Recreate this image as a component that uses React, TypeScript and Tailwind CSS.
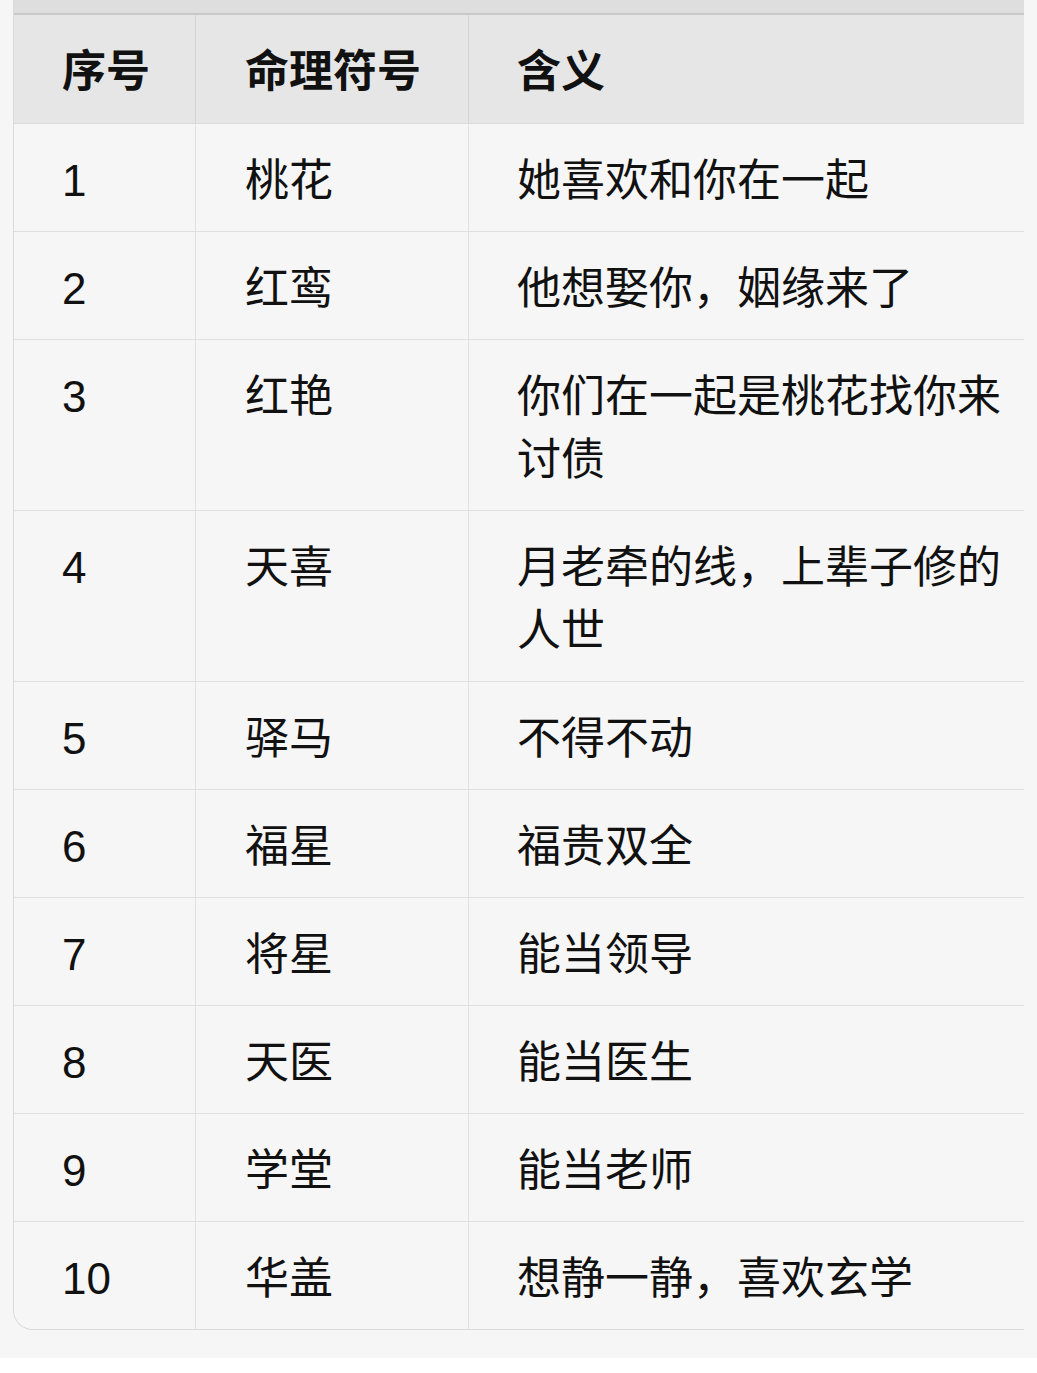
const rows: [string, string, string][] = [
  ['1', '桃花', '她喜欢和你在一起'],
  ['2', '红鸾', '他想娶你，姻缘来了'],
  ['3', '红艳', '你们在一起是桃花找你来讨债'],
  ['4', '天喜', '月老牵的线，上辈子修的人世'],
  ['5', '驿马', '不得不动'],
  ['6', '福星', '福贵双全'],
  ['7', '将星', '能当领导'],
  ['8', '天医', '能当医生'],
  ['9', '学堂', '能当老师'],
  ['10', '华盖', '想静一静，喜欢玄学'],
]

const font = { fontFamily: '"Liberation Sans", "Noto Sans CJK SC", sans-serif' }

export default function App() {
  return (
    <div className="min-h-[1373px] w-full bg-white text-[#111]" style={font}>
      <div className="bg-[#f6f6f6] pb-[28px] pl-[13px] pr-[13px]">
        <div className="overflow-hidden rounded-bl-[20px] border-b border-l border-[#dadada]">
          {/* cut-off row above the header */}
          <div className="h-[15px] border-b-2 border-[#c9c9c9] bg-[#dedede]" />

          <div className="grid grid-cols-[182px_273px_1fr] border-b border-[#dadada] bg-[#e6e6e6] text-[44px] font-semibold leading-[63px]">
            <div className="border-r border-[#d6d6d6] pb-[20px] pl-[48px] pt-[25px]">序号</div>
            <div className="border-r border-[#d6d6d6] pb-[20px] pl-[49px] pt-[25px]">命理符号</div>
            <div className="pb-[20px] pl-[48px] pt-[25px]">含义</div>
          </div>

          {rows.map(([no, sign, meaning], i) => (
            <div
              key={no}
              className={`grid grid-cols-[182px_273px_1fr] bg-[#f6f6f6] text-[44px] leading-[63px] ${
                i < rows.length - 1 ? 'border-b border-[#e0e0e0]' : ''
              }`}
            >
              <div className="border-r border-[#e0e0e0] pb-[19px] pl-[48px] pt-[25px]">{no}</div>
              <div className="border-r border-[#e0e0e0] pb-[19px] pl-[49px] pt-[25px]">{sign}</div>
              <div className="pb-[19px] pl-[48px] pr-[10px] pt-[25px]">{meaning}</div>
            </div>
          ))}
        </div>
      </div>
    </div>
  )
}
